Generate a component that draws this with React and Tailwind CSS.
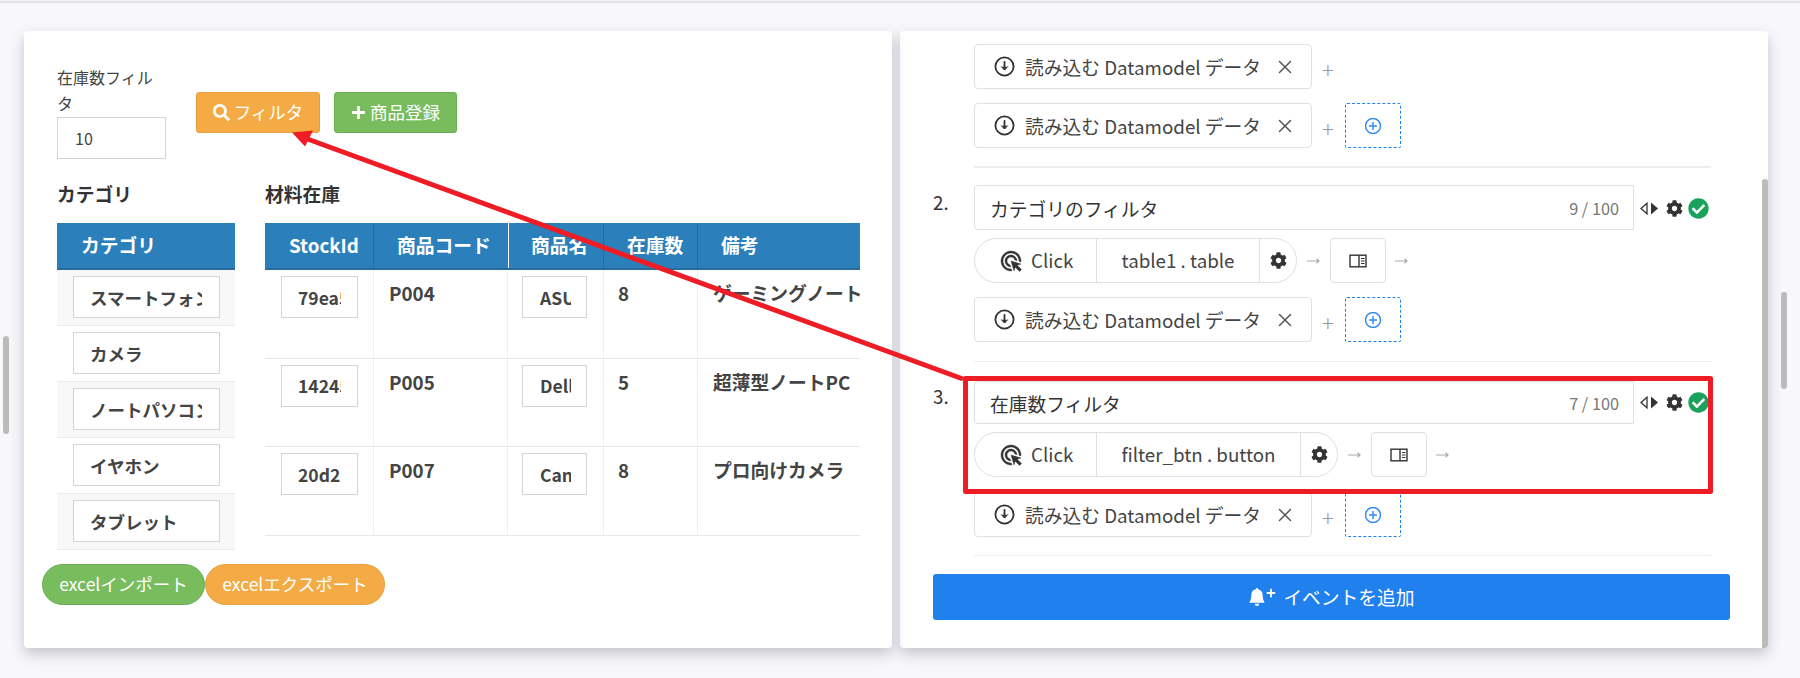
import React from "react";
import { FaSearch, FaPlus, FaCog, FaCheckCircle } from "react-icons/fa";
import { BsBellFill, BsPlusCircle } from "react-icons/bs";
import { X } from "lucide-react";

const FONT = "font-['Noto_Sans_CJK_JP','Noto_Sans',sans-serif]";

function DownCircle() {
  return (
    <svg width="21" height="21" viewBox="0 0 21 21" fill="none" stroke="#333" strokeWidth="1.8" strokeLinecap="round" strokeLinejoin="round">
      <circle cx="10.5" cy="10.5" r="9.1" />
      <path d="M10.5 5.8v7.4" />
      <path d="M7.4 10.8l3.1 3.2 3.1-3.2" fill="#333" strokeWidth="1" />
    </svg>
  );
}

function ClickIcon() {
  return (
    <svg width="24" height="24" viewBox="0 0 24 24" fill="#333" stroke="#333" strokeWidth="0.4">
      <path d="M11.71 17.99A5.993 5.993 0 0 1 6 12c0-3.31 2.69-6 6-6 3.22 0 5.84 2.53 5.99 5.71l-2.1-.63A3.999 3.999 0 0 0 12 8c-2.21 0-4 1.79-4 4 0 1.9 1.34 3.48 3.12 3.89l.59 2.1zM22 12c0 .3-.01.6-.04.9l-1.97-.59c.01-.1.01-.21.01-.31 0-4.42-3.58-8-8-8s-8 3.58-8 8 3.58 8 8 8c.1 0 .21 0 .31-.01l.59 1.97c-.3.03-.6.04-.9.04-5.52 0-10-4.48-10-10S6.48 2 12 2s10 4.48 10 10zm-3.77 4.26L22 15l-10-3 3 10 1.26-3.77 4.27 4.27 1.98-1.98-4.28-4.26z" />
    </svg>
  );
}

function PanelIcon() {
  return (
    <svg width="18" height="14" viewBox="0 0 18 14" fill="none" stroke="#333" strokeWidth="1.4">
      <rect x="1" y="1.2" width="16" height="11.6" />
      <path d="M10 1.2v11.6" />
      <path d="M12 4.5h3.5M12 7h3.5M12 9.5h3.5" strokeWidth="1.1" />
    </svg>
  );
}

function Arrow() {
  return (
    <svg width="13" height="8" viewBox="0 0 13 8" fill="none" stroke="#aaa" strokeWidth="1.2">
      <path d="M0 4h12M9.5 1.8L12 4 9.5 6.2" />
    </svg>
  );
}

function Carets() {
  return (
    <svg width="18" height="13" viewBox="0 0 18 13">
      <path d="M7 1.2v10.6L1 6.5z" fill="none" stroke="#333" strokeWidth="1.3" />
      <path d="M11 0.5v12L18 6.5z" fill="#333" />
    </svg>
  );
}

function LoadRow({ dashed = true, className = "" }) {
  return (
    <div className={`flex items-start ${className}`}>
      <div className="w-[338px] h-[45px] border border-[#dfdfe4] rounded-[4px] flex items-center pl-[19px] pr-[15px] text-[#444] text-[18.75px] box-border">
        <DownCircle />
        <span className="ml-[10px] mt-[1px] whitespace-nowrap">読み込む Datamodel データ</span>
        <X size={22} strokeWidth={1.6} className="ml-auto text-[#555]" />
      </div>
      <span className="ml-[9px] mt-[12px] text-[#999] text-[22px] leading-[26px] font-light w-[14px] text-center">+</span>
      {dashed ? (
        <div className="ml-[10px] w-[56px] h-[45px] border border-dashed border-[#1f80ee] rounded-[2px] flex items-center justify-center box-border">
          <BsPlusCircle className="text-[#1f80ee] text-[16px]" stroke="currentColor" strokeWidth="0.4" />
        </div>
      ) : null}
    </div>
  );
}

function TitleRow({ num, title, count, h, numTop, iconTop }) {
  return (
    <div className="flex items-start">
      <div style={{ marginTop: numTop }} className="w-[41px] text-[18.75px] text-[#333] leading-[24px]">{num}</div>
      <div style={{ height: h }} className="w-[660px] border border-[#dfdfe4] rounded-l-[4px] flex items-center justify-between pl-[15px] pr-[14px] box-border">
        <span className="text-[18.75px] text-[#333] mt-[3px]">{title}</span>
        <span className="text-[16.3px] text-[#777] mt-[2px]">{count}</span>
      </div>
      <div style={{ marginTop: iconTop }} className="flex items-center ml-[6px] h-[20px]">
        <Carets />
        <FaCog className="ml-[8px] text-[17px] text-[#333]" />
        <FaCheckCircle className="ml-[5px] text-[21px] text-[#1aa25b]" />
      </div>
    </div>
  );
}

function ClickRow({ target, width, mid }) {
  return (
    <div className="flex items-center mt-[8px] ml-[41px]">
      <div style={{ width }} className="h-[45px] border border-[#dfdfe4] rounded-full flex items-stretch box-border">
        <div className="w-[122px] flex items-center pl-[24px] border-r border-[#dfdfe4] box-border">
          <ClickIcon />
          <span className="ml-[8px] text-[18.75px] text-[#444]">Click</span>
        </div>
        <div style={{ width: mid }} className="flex items-center justify-center text-[18.75px] text-[#444] border-r border-[#dfdfe4] box-border whitespace-nowrap">
          {target}
        </div>
        <div className="flex-1 flex items-center pl-[10px]">
          <FaCog className="text-[17px] text-[#333]" />
        </div>
      </div>
      <div className="ml-[10px]"><Arrow /></div>
      <div className="ml-[10px] w-[56px] h-[45px] border border-[#dfdfe4] rounded-[4px] flex items-center justify-center box-border">
        <PanelIcon />
      </div>
      <div className="ml-[9px]"><Arrow /></div>
    </div>
  );
}

const cats = ["スマートフォン", "カメラ", "ノートパソコン", "イヤホン", "タブレット"];
const stock = [
  ["79ea5", "P004", "ASUS", "8", "ゲーミングノートPC"],
  ["14245", "P005", "Dell", "5", "超薄型ノートPC"],
  ["20d2", "P007", "Canon", "8", "プロ向けカメラ"],
];

function CellInput({ value, w, pl, inner }) {
  return (
    <div style={{ width: w, paddingLeft: pl }} className="h-[42px] bg-white border border-[#d4d4d8] flex items-center box-border">
      <span style={{ width: inner }} className="overflow-hidden whitespace-nowrap font-semibold text-[17.5px] leading-[27px] text-[#444]">{value}</span>
    </div>
  );
}

const th = "h-full flex items-center text-white font-bold text-[18.75px] box-border whitespace-nowrap";
const td = "font-semibold text-[18.75px] leading-[27px] text-[#444]";

export default function App() {
  return (
    <div className={`${FONT} relative w-[1800px] h-[678px] overflow-hidden bg-[#f8f8fb] flex pt-[1px] box-border`}>
      <div className="absolute left-0 right-0 top-[1px] h-[2px] bg-[#e2e2e8]" />

      {/* page left scrollbar */}
      <div className="w-[24px] shrink-0 pl-[3px] pt-[335px]">
        <div className="w-[6px] h-[98px] bg-[#bbb] rounded-[3px]" />
      </div>

      {/* left panel */}
      <div className="w-[868px] h-[617px] mt-[30px] bg-white rounded-[4px] shadow-[0_6px_14px_rgba(60,60,90,0.28)] shrink-0 relative">
        <div className="pl-[33px] pt-[33px] flex items-start">
          <div className="w-[109px]">
            <div className="text-[16px] leading-[26px] text-[#444] w-[100px] h-[53px]">在庫数フィルタ</div>
            <div className="w-[109px] h-[42px] border border-[#d4d4d8] flex items-center pl-[17px] text-[16px] text-[#444] box-border">10</div>
          </div>
          <button className="ml-[30px] mt-[28px] w-[124px] h-[41px] bg-[#f4ab45] border border-[#e8a03e] rounded-[3px] text-white text-[17.5px] flex items-center justify-center box-border">
            <FaSearch className="text-[17px] mr-[4px]" />フィルタ
          </button>
          <button className="ml-[14px] mt-[28px] w-[123px] h-[41px] bg-[#78bc5e] border border-[#6dae55] rounded-[3px] text-white text-[17.5px] flex items-center justify-center box-border">
            <FaPlus className="text-[15px] mr-[4px]" />商品登録
          </button>
        </div>

        <div className="flex mt-[22px] pl-[33px]">
          <div className="w-[178px]">
            <div className="h-[29px] font-bold text-[18.75px] leading-[25px] text-[#333]">カテゴリ</div>
            <div className="mt-[13px] h-[47px] bg-[#2b7fbb] border-b-2 border-[#276a9b] text-white font-bold text-[18.75px] flex items-center pl-[24px] box-border">カテゴリ</div>
            {cats.map((c, i) => (
              <div key={c} className={`h-[56px] pl-[16px] pt-[6px] border-b border-[#ececf0] box-border ${i % 2 === 0 ? "bg-[#f8f8f8]" : "bg-white"}`}>
                <CellInput value={c} w={147} pl={16} inner={112} />
              </div>
            ))}
          </div>

          <div className="ml-[30px] w-[595px] overflow-hidden">
            <div className="h-[29px] font-bold text-[18.75px] leading-[25px] text-[#333]">材料在庫</div>
            <div className="mt-[13px] w-[595px] flex h-[47px] bg-[#2b7fbb] border-b-2 border-[#276a9b] box-border">
              <div className={`${th} w-[109px] pl-[24px] border-r border-[#276a9b]`}>StockId</div>
              <div className={`${th} w-[135px] pl-[23px] border-r border-white`}>商品コード</div>
              <div className={`${th} w-[95px] pl-[22px] border-r border-[#276a9b]`}>商品名</div>
              <div className={`${th} w-[94px] pl-[23px] border-r border-[#276a9b]`}>在庫数</div>
              <div className={`${th} flex-1 pl-[23px]`}>備考</div>
            </div>
            {stock.map((r) => (
              <div key={r[0]} className="flex h-[88.7px] border-b border-[#e8e8ec] box-border">
                <div className="w-[109px] pl-[16px] pt-[6px] border-r border-[#f0f0f3] box-border">
                  <CellInput value={r[0]} w={77} pl={16} inner={43} />
                </div>
                <div className={`w-[134px] pl-[15px] pt-[9px] border-r border-[#f0f0f3] box-border ${td}`}>{r[1]}</div>
                <div className="w-[96px] pl-[14px] pt-[6px] border-r border-[#f0f0f3] box-border">
                  <CellInput value={r[2]} w={65} pl={17} inner={31} />
                </div>
                <div className={`w-[94px] pl-[14px] pt-[9px] border-r border-[#f0f0f3] box-border ${td}`}>{r[3]}</div>
                <div className={`flex-1 pl-[15px] pt-[9px] whitespace-nowrap overflow-hidden ${td}`}>{r[4]}</div>
              </div>
            ))}
          </div>
        </div>

        <div className="absolute left-[18px] top-[533px] flex">
          <button className="w-[163px] h-[41px] rounded-full bg-[#78bc5e] border border-[#6dae55] text-white text-[17.5px] box-border whitespace-nowrap">excelインポート</button>
          <button className="w-[180px] h-[41px] rounded-full bg-[#f4ab45] border border-[#e8a03e] text-white text-[17.5px] box-border whitespace-nowrap">excelエクスポート</button>
        </div>
      </div>

      {/* right panel */}
      <div className="ml-[8px] w-[868px] h-[617px] mt-[30px] bg-white rounded-[4px] shadow-[0_6px_14px_rgba(60,60,90,0.28)] shrink-0 flex overflow-hidden">
        <div className="w-[862px] pl-[33px] pt-[13px] box-border">
          <div className="ml-[41px] w-[737px]">
            <LoadRow dashed={false} />
            <LoadRow className="mt-[14px]" />
            <div className="h-[2px] bg-[#eeeef2] mt-[18px]" />
          </div>
          <div className="mt-[17px]">
            <TitleRow num="2." title="カテゴリのフィルタ" count="9 / 100" h={45} numTop={5} iconTop={13} />
            <ClickRow target="table1 . table" width={323} mid={163} />
            <LoadRow className="mt-[14px] ml-[41px]" />
            <div className="h-[1px] bg-[#eeeef2] mt-[19px] ml-[41px] w-[737px]" />
          </div>
          <div className="mt-[19px]">
            <TitleRow num="3." title="在庫数フィルタ" count="7 / 100" h={43} numTop={3} iconTop={11} />
            <ClickRow target="filter_btn . button" width={364} mid={204} />
            <LoadRow className="mt-[15px] ml-[41px]" />
            <div className="h-[1px] bg-[#eeeef2] mt-[18px] ml-[41px] w-[737px]" />
          </div>
          <button className="mt-[18px] w-[797px] h-[46px] bg-[#2080ee] rounded-[3px] text-white text-[18.75px] flex items-center justify-center">
            <BsBellFill className="text-[18px]" />
            <FaPlus className="text-[10px] mb-[9px] mr-[7px]" />
            イベントを追加
          </button>
        </div>
        <div className="w-[6px] pt-[148px]">
          <div className="w-[6px] h-[469px] bg-[#bbb] rounded-t-[3px]" />
        </div>
      </div>

      {/* page right scrollbar */}
      <div className="ml-[13px] pt-[291px]">
        <div className="w-[6px] h-[97px] bg-[#bbb] rounded-[3px]" />
      </div>

      {/* annotation overlay */}
      <svg className="absolute left-0 top-0 pointer-events-none" width="1800" height="678" viewBox="0 0 1800 678">
        <path d="M965.5 378.5H1710.5V491.5H965.5Z" fill="none" stroke="#ee1c25" strokeWidth="5" strokeLinejoin="round" />
        <path d="M963 379L302 137" stroke="#ee1c25" strokeWidth="5" />
        <path d="M292 132.5L313 130.5L305 146.5Z" fill="#ee1c25" />
      </svg>
    </div>
  );
}
